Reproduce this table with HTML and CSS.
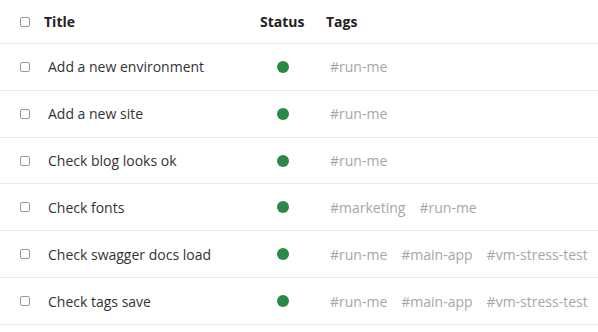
FILE: index.html
```html
<!DOCTYPE html>
<html>
<head>
<meta charset="utf-8">
<link rel="stylesheet" href="styles.css">
</head>
<body>
<div class="table">
  <div class="row head">
    <span class="cb"></span>
    <span class="title">Title</span>
    <span class="status">Status</span>
    <span class="tags">Tags</span>
  </div>
  <div class="row">
    <span class="cb"></span>
    <span class="title">Add a new environment</span>
    <span class="status"><i class="dot"></i></span>
    <span class="tags"><span>#run-me</span></span>
  </div>
  <div class="row">
    <span class="cb"></span>
    <span class="title">Add a new site</span>
    <span class="status"><i class="dot"></i></span>
    <span class="tags"><span>#run-me</span></span>
  </div>
  <div class="row">
    <span class="cb"></span>
    <span class="title">Check blog looks ok</span>
    <span class="status"><i class="dot"></i></span>
    <span class="tags"><span>#run-me</span></span>
  </div>
  <div class="row">
    <span class="cb"></span>
    <span class="title">Check fonts</span>
    <span class="status"><i class="dot"></i></span>
    <span class="tags"><span>#marketing</span><span>#run-me</span></span>
  </div>
  <div class="row">
    <span class="cb"></span>
    <span class="title">Check swagger docs load</span>
    <span class="status"><i class="dot"></i></span>
    <span class="tags"><span>#run-me</span><span>#main-app</span><span>#vm-stress-test</span></span>
  </div>
  <div class="row">
    <span class="cb"></span>
    <span class="title">Check tags save</span>
    <span class="status"><i class="dot"></i></span>
    <span class="tags"><span>#run-me</span><span>#main-app</span><span>#vm-stress-test</span></span>
  </div>
</div>
</body>
</html>
```

FILE: styles.css
```css
html, body {
  margin: 0;
  padding: 0;
  background: #fff;
}
body {
  font-family: "Open Sans", "Liberation Sans", sans-serif;
  font-size: 14px;
  color: #333;
}
.table {
  display: flex;
  flex-direction: column;
}
.row {
  display: grid;
  grid-template-columns: 10px 230px 46px 1fr;
  align-items: center;
  height: 45.83px;
  padding-left: 20px;
  border-bottom: 1px solid #ebebeb;
  white-space: nowrap;
}
.row.head {
  height: 43px;
  font-weight: 700;
  color: #222;
}
.cb {
  box-sizing: border-box;
  width: 10px;
  height: 10px;
  border: 1px solid #9a9a9a;
  border-radius: 2px;
}
.title {
  padding-left: 18px;
}
.head .title {
  padding-left: 14px;
}
.status {
  display: flex;
  justify-content: center;
}
.head .status {
  justify-content: flex-start;
}
.dot {
  display: block;
  width: 12px;
  height: 12px;
  border-radius: 50%;
  background: #2a8a45;
}
.tags {
  display: flex;
  gap: 14px;
  padding-left: 24px;
  color: #a6a6a6;
}
.head .tags {
  padding-left: 20px;
  color: #222;
}
```
